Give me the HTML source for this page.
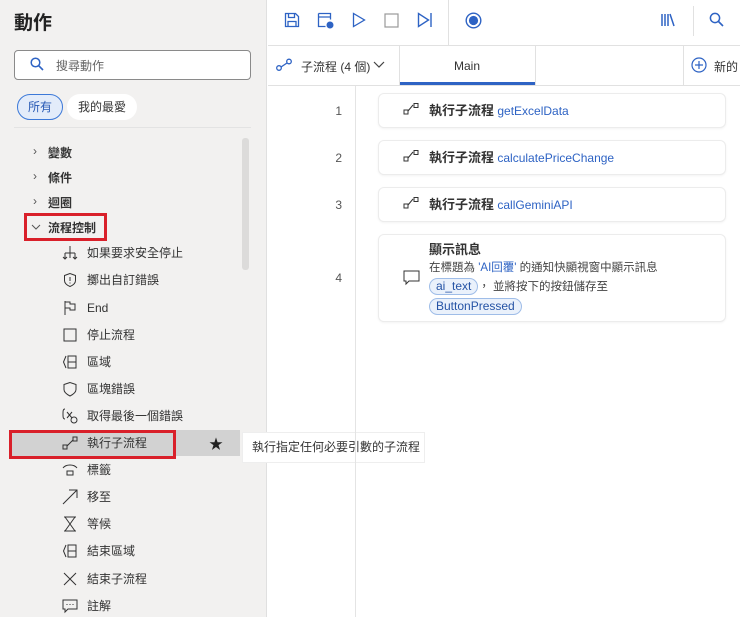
<!DOCTYPE html>
<html><head><meta charset="utf-8"><style>
*{box-sizing:border-box;margin:0;padding:0}
body{width:740px;height:617px;overflow:hidden;background:#fff;font-family:"Liberation Sans","Noto Sans CJK TC",sans-serif;color:#222;position:relative;font-size:12px}
.abs{position:absolute}
#left{left:0;top:0;width:267px;height:617px;background:#f2f1f0;border-right:1px solid #e0e0e0}
.item{position:absolute;left:62px;font-size:12px;color:#333;height:20px;line-height:20px}
.item svg{position:absolute;left:0;top:2px}
.item span{position:absolute;left:25px;white-space:nowrap}
.cat{position:absolute;left:48px;font-size:12px;font-weight:bold;color:#333}
.chev{position:absolute;left:33px;color:#555;font-size:12px}
.card{position:absolute;left:378px;width:348px;background:#fff;border:1px solid #ececec;border-radius:6px;box-shadow:0 1px 2px rgba(0,0,0,.05)}
.ln{position:absolute;left:330px;width:12px;text-align:right;color:#555;font-size:12px}
.t{font-size:13px;font-weight:bold;color:#333}
.b{color:#2e63c4;font-size:12px}
.pill{display:inline-block;border:1px solid #9fbde8;background:#eaf1fb;color:#2553a5;border-radius:9px;padding:0 6px;height:17px;line-height:15px;font-size:12px}
</style></head><body>
<div id="left" class="abs">
<div class="abs" style="left:14px;top:8px;font-size:19px;font-weight:bold;color:#222">動作</div>
<div class="abs" style="left:14px;top:50px;width:237px;height:30px;border:1px solid #8a8a8a;border-radius:4px;background:#fff"></div>
<svg class="abs" style="left:30px;top:57px" width="14" height="14" viewBox="0 0 14 14"><circle cx="5.5" cy="5.5" r="4.3" fill="none" stroke="#2e63c4" stroke-width="1.5"/><path d="M8.7 8.7L13 13" stroke="#2e63c4" stroke-width="1.6"/></svg>
<div class="abs" style="left:56px;top:57px;color:#666">搜尋動作</div>
<div class="abs" style="left:17px;top:94px;width:46px;height:26px;border:1px solid #3b78d8;background:#e3ecfa;border-radius:13px;color:#2a5bb5;text-align:center;line-height:24px;font-size:12px">所有</div>
<div class="abs" style="left:67px;top:94px;width:70px;height:26px;background:#fff;border-radius:13px;text-align:center;line-height:26px;color:#333">我的最愛</div>
<div class="abs" style="left:14px;top:127px;width:237px;height:1px;background:#e3e3e3"></div>
<div class="abs" style="left:242px;top:138px;width:7px;height:132px;background:#dcdbda;border-radius:3px"></div>
<div class="chev" style="top:144px">›</div><div class="cat" style="top:144px">變數</div>
<div class="chev" style="top:169px">›</div><div class="cat" style="top:169px">條件</div>
<div class="chev" style="top:194px">›</div><div class="cat" style="top:194px">迴圈</div>
<svg class="abs" style="left:31px;top:224px" width="10" height="7"><path d="M1 1l4 4 4-4" stroke="#555" fill="none"/></svg>
<div class="cat" style="top:219px">流程控制</div>
<div class="abs" style="left:24px;top:213px;width:83px;height:28px;border:3px solid #d9202a"></div>
<div class="abs" style="left:10px;top:430px;width:230px;height:26px;background:#d2d2d2"></div>
<div class="abs" style="left:9px;top:430px;width:167px;height:29px;border:3px solid #d9202a"></div>
<div class="abs" style="left:209px;top:434px;font-size:14px;color:#222">★</div>
<div class="item" style="top:243px"><svg width="16" height="16"><path d="M8 1v12M3 8v6M13 8v6M3 8h10M1 12l2 2 2-2M11 12l2 2 2-2" stroke="#333" fill="none"/></svg><span>如果要求安全停止</span></div>
<div class="item" style="top:270px"><svg width="16" height="16"><path d="M8 1.5L2.5 3.5v5c0 3 3 5 5.5 6 2.5-1 5.5-3 5.5-6v-5z" stroke="#333" fill="none"/><path d="M8 5v4M8 10.5v1" stroke="#333"/></svg><span>擲出自訂錯誤</span></div>
<div class="item" style="top:298px"><svg width="16" height="16"><path d="M3 1v14M3 2h5v2h5v6H8V8H3" stroke="#333" fill="none"/></svg><span>End</span></div>
<div class="item" style="top:325px"><svg width="16" height="16"><rect x="2" y="2" width="12" height="12" stroke="#333" fill="none"/></svg><span>停止流程</span></div>
<div class="item" style="top:352px"><svg width="16" height="16"><path d="M4 2L1.5 8 4 14M6 2h8v12H6zM6 8h8" stroke="#333" fill="none"/></svg><span>區域</span></div>
<div class="item" style="top:379px"><svg width="16" height="16"><path d="M8 1.5L2 3.5v5c0 3 3 5 6 6.5 3-1.5 6-3.5 6-6.5v-5z" stroke="#333" fill="none"/></svg><span>區塊錯誤</span></div>
<div class="item" style="top:406px"><svg width="16" height="16"><path d="M3 1C1 1 1 3 1 6s0 5 2 5M5 4l5 6M10 4l-5 6" stroke="#333" fill="none"/><circle cx="12" cy="12" r="3" stroke="#333" fill="none"/></svg><span>取得最後一個錯誤</span></div>
<div class="item" style="top:433px"><svg width="16" height="16"><rect x="1" y="10" width="4" height="4" stroke="#333" fill="none"/><rect x="11" y="2" width="4" height="4" stroke="#333" fill="none"/><path d="M5 11L11 5" stroke="#333"/></svg><span>執行子流程</span></div>
<div class="item" style="top:460px"><svg width="16" height="16"><path d="M1 6c3-4 11-4 14 0M5 9h6v4H5z" stroke="#333" fill="none"/></svg><span>標籤</span></div>
<div class="item" style="top:487px"><svg width="16" height="16"><path d="M1 15L15 1M7 1h8v8" stroke="#333" fill="none"/></svg><span>移至</span></div>
<div class="item" style="top:514px"><svg width="16" height="16"><path d="M2 1h12M2 15h12M3 1l10 14M13 1L3 15" stroke="#333" fill="none"/></svg><span>等候</span></div>
<div class="item" style="top:541px"><svg width="16" height="16"><path d="M4 2L1.5 8 4 14M6 2h8v12H6zM6 8h8" stroke="#333" fill="none"/></svg><span>結束區域</span></div>
<div class="item" style="top:569px"><svg width="16" height="16"><path d="M2 2l12 12M14 2L2 14" stroke="#333" fill="none"/></svg><span>結束子流程</span></div>
<div class="item" style="top:596px"><svg width="16" height="16"><path d="M1 2h14v9H6l-3 3v-3H1z" stroke="#333" fill="none"/><path d="M5 6v1M8 6v1M11 6v1" stroke="#333"/></svg><span>註解</span></div>
</div>
<div class="abs" style="left:242px;top:432px;width:183px;height:31px;background:#fff;border:1px solid #eee;line-height:29px;padding-left:9px;color:#333;font-size:12px">執行指定任何必要引數的子流程</div>

<div class="abs" style="left:268px;top:45px;width:472px;height:1px;background:#e1e1e1"></div>
<div class="abs" style="left:448px;top:0;width:1px;height:45px;background:#e1e1e1"></div>
<div class="abs" style="left:693px;top:6px;width:1px;height:30px;background:#e1e1e1"></div>
<svg class="abs" style="left:284px;top:12px" width="16" height="16"><path d="M1.5 1.5h10l3 3v10h-13z M4.5 1.5v4h6v-4 M4 14.5v-5h8v5" stroke="#2e63c4" fill="none" stroke-width="1.3"/></svg>
<svg class="abs" style="left:317px;top:12px" width="18" height="18"><path d="M1.5 1.5h12v6M1.5 1.5v13h7M1.5 5h12" stroke="#2e63c4" fill="none" stroke-width="1.3"/><circle cx="13" cy="13" r="3.5" fill="#2e63c4"/></svg>
<svg class="abs" style="left:351px;top:12px" width="16" height="16"><path d="M2.5 1.5v13l11-6.5z" stroke="#2e63c4" fill="none" stroke-width="1.3"/></svg>
<svg class="abs" style="left:384px;top:13px" width="15" height="15"><rect x="1" y="1" width="13" height="13" stroke="#999" fill="none" stroke-width="1.2"/></svg>
<svg class="abs" style="left:417px;top:12px" width="16" height="16"><path d="M1.5 1.5v13l10-6.5z M14 1v14" stroke="#2e63c4" fill="none" stroke-width="1.4"/></svg>
<svg class="abs" style="left:465px;top:12px" width="17" height="17"><circle cx="8.5" cy="8.5" r="7.3" stroke="#2e63c4" fill="none" stroke-width="1.4"/><circle cx="8.5" cy="8.5" r="4.6" fill="#2e63c4"/></svg>
<svg class="abs" style="left:660px;top:12px" width="16" height="16"><path d="M2 2v12M5 2v12M8 2v12M10 2l4 12" stroke="#2e63c4" fill="none" stroke-width="1.5"/></svg>
<svg class="abs" style="left:709px;top:12px" width="15" height="15"><circle cx="6" cy="6" r="4.6" fill="none" stroke="#2e63c4" stroke-width="1.5"/><path d="M9.5 9.5L14 14" stroke="#2e63c4" stroke-width="1.6"/></svg>
<div class="abs" style="left:268px;top:85px;width:472px;height:1px;background:#e1e1e1"></div>
<div class="abs" style="left:399px;top:46px;width:1px;height:39px;background:#e1e1e1"></div>
<div class="abs" style="left:535px;top:46px;width:1px;height:39px;background:#e1e1e1"></div>
<div class="abs" style="left:683px;top:46px;width:1px;height:39px;background:#e1e1e1"></div>
<div class="abs" style="left:400px;top:82px;width:135px;height:3px;background:#2e63c4"></div>
<svg class="abs" style="left:276px;top:58px" width="16" height="14"><circle cx="3" cy="10" r="2.3" stroke="#2e63c4" fill="none" stroke-width="1.3"/><circle cx="13" cy="3.5" r="2.3" stroke="#2e63c4" fill="none" stroke-width="1.3"/><path d="M5 9l6-4" stroke="#2e63c4" stroke-width="1.3"/></svg>
<div class="abs" style="left:301px;top:58px;font-size:12px;color:#333">子流程 (4 個)</div>
<svg class="abs" style="left:373px;top:61px" width="12" height="8"><path d="M1 1l5 5 5-5" stroke="#444" fill="none" stroke-width="1.2"/></svg>
<div class="abs" style="left:454px;top:59px;font-size:12px;color:#333">Main</div>
<svg class="abs" style="left:691px;top:57px" width="16" height="16"><circle cx="8" cy="8" r="7" stroke="#2e63c4" fill="none" stroke-width="1.2"/><path d="M8 4v8M4 8h8" stroke="#2e63c4" stroke-width="1.2"/></svg>
<div class="abs" style="left:714px;top:58px;font-size:12px;color:#333">新的</div>
<div class="abs" style="left:355px;top:86px;width:1px;height:531px;background:#e4e4e4"></div>
<div class="ln" style="top:104px">1</div>
<div class="ln" style="top:151px">2</div>
<div class="ln" style="top:198px">3</div>
<div class="ln" style="top:271px">4</div>
<div class="card" style="top:93px;height:35px"><svg class="abs" style="left:24px;top:8px" width="16" height="14"><rect x="1" y="8" width="4" height="4" stroke="#333" fill="none"/><rect x="11" y="1.5" width="4" height="4" stroke="#333" fill="none"/><path d="M5 9l5-6" stroke="#333"/></svg><div class="abs" style="left:50px;top:6px"><span class="t">執行子流程</span> <span class="b">getExcelData</span></div></div>
<div class="card" style="top:140px;height:35px"><svg class="abs" style="left:24px;top:8px" width="16" height="14"><rect x="1" y="8" width="4" height="4" stroke="#333" fill="none"/><rect x="11" y="1.5" width="4" height="4" stroke="#333" fill="none"/><path d="M5 9l5-6" stroke="#333"/></svg><div class="abs" style="left:50px;top:6px"><span class="t">執行子流程</span> <span class="b">calculatePriceChange</span></div></div>
<div class="card" style="top:187px;height:35px"><svg class="abs" style="left:24px;top:8px" width="16" height="14"><rect x="1" y="8" width="4" height="4" stroke="#333" fill="none"/><rect x="11" y="1.5" width="4" height="4" stroke="#333" fill="none"/><path d="M5 9l5-6" stroke="#333"/></svg><div class="abs" style="left:50px;top:6px"><span class="t">執行子流程</span> <span class="b">callGeminiAPI</span></div></div>
<div class="card" style="top:234px;height:88px">
<svg class="abs" style="left:24px;top:35px" width="17" height="16"><path d="M1 1h15v10H6l-3 3v-3H1z" stroke="#333" fill="none"/></svg>
<div class="abs t" style="left:50px;top:4px">顯示訊息</div>
<div class="abs" style="left:50px;top:24px;color:#444;font-size:11.5px;white-space:nowrap">在標題為 <span class="b" style="font-size:11.5px">'AI回覆'</span> 的通知快顯視窗中顯示訊息</div>
<div class="abs" style="left:50px;top:43px;color:#444;font-size:11.5px;white-space:nowrap"><span class="pill">ai_text</span>， 並將按下的按鈕儲存至</div>
<div class="abs" style="left:50px;top:63px"><span class="pill">ButtonPressed</span></div>
</div>
</body></html>
